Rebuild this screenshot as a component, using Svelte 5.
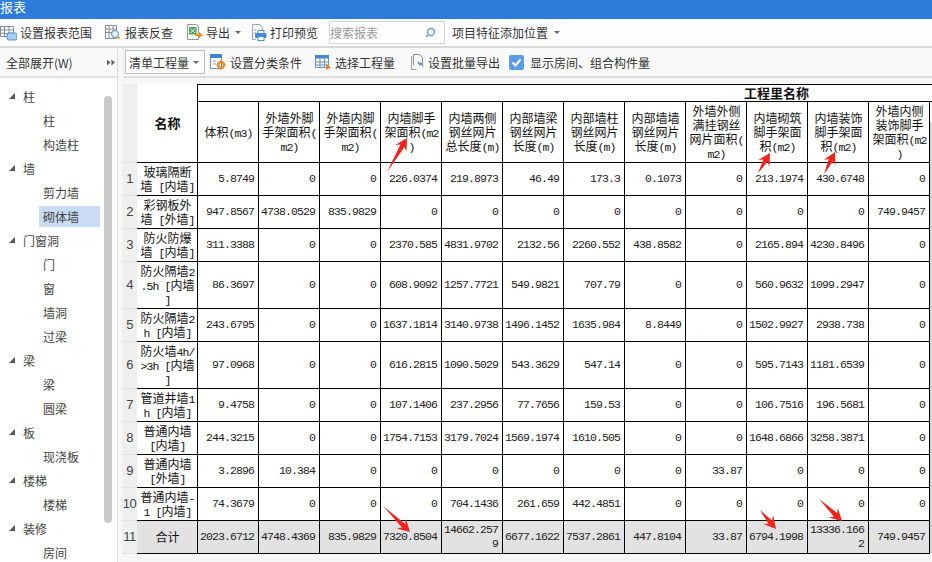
<script lang="ts">
	const tree = [
		{ name: '柱', kids: ['柱', '构造柱'] },
		{ name: '墙', kids: ['剪力墙', '砌体墙'] },
		{ name: '门窗洞', kids: ['门', '窗', '墙洞', '过梁'] },
		{ name: '梁', kids: ['梁', '圆梁'] },
		{ name: '板', kids: ['现浇板'] },
		{ name: '楼梯', kids: ['楼梯'] },
		{ name: '装修', kids: ['房间'] }
	];

	const headers = [
		'体积(m3)',
		'外墙外脚手架面积(m2)',
		'外墙内脚手架面积(m2)',
		'内墙脚手架面积(m2)',
		'内墙两侧钢丝网片总长度(m)',
		'内部墙梁钢丝网片长度(m)',
		'内部墙柱钢丝网片长度(m)',
		'内部墙墙钢丝网片长度(m)',
		'外墙外侧满挂钢丝网片面积(m2)',
		'内墙砌筑脚手架面积(m2)',
		'内墙装饰脚手架面积(m2)',
		'外墙内侧装饰脚手架面积(m2)'
	];

	const rows = [
		['玻璃隔断墙 [内墙]', '5.8749', '0', '0', '226.0374', '219.8973', '46.49', '173.3', '0.1073', '0', '213.1974', '430.6748', '0'],
		['彩钢板外墙 [外墙]', '947.8567', '4738.0529', '835.9829', '0', '0', '0', '0', '0', '0', '0', '0', '749.9457'],
		['防火防爆墙 [内墙]', '311.3388', '0', '0', '2370.585', '4831.9702', '2132.56', '2260.552', '438.8582', '0', '2165.894', '4230.8496', '0'],
		['防火隔墙2.5h [内墙]', '86.3697', '0', '0', '608.9092', '1257.7721', '549.9821', '707.79', '0', '0', '560.9632', '1099.2947', '0'],
		['防火隔墙2h [内墙]', '243.6795', '0', '0', '1637.1814', '3140.9738', '1496.1452', '1635.984', '8.8449', '0', '1502.9927', '2938.738', '0'],
		['防火墙4h/>3h [内墙]', '97.0968', '0', '0', '616.2815', '1090.5029', '543.3629', '547.14', '0', '0', '595.7143', '1181.6539', '0'],
		['管道井墙1h [内墙]', '9.4758', '0', '0', '107.1406', '237.2956', '77.7656', '159.53', '0', '0', '106.7516', '196.5681', '0'],
		['普通内墙 [内墙]', '244.3215', '0', '0', '1754.7153', '3179.7024', '1569.1974', '1610.505', '0', '0', '1648.6866', '3258.3871', '0'],
		['普通内墙 [外墙]', '3.2896', '10.384', '0', '0', '0', '0', '0', '0', '33.87', '0', '0', '0'],
		['普通内墙-1 [内墙]', '74.3679', '0', '0', '0', '704.1436', '261.659', '442.4851', '0', '0', '0', '0', '0'],
		['合计', '2023.6712', '4748.4369', '835.9829', '7320.8504', '14662.2579', '6677.1622', '7537.2861', '447.8104', '33.87', '6794.1998', '13336.1662', '749.9457']
	];

	// red annotation arrows, tail -> tip
	const arrows = [
		[387, 172, 407, 138],
		[758, 173, 770, 153],
		[824, 174, 835, 152],
		[383, 506, 410, 532],
		[760, 510, 776, 529],
		[819, 499, 842, 521]
	];

	function arrowPoints([x1, y1, x2, y2]: number[]) {
		const len = Math.hypot(x2 - x1, y2 - y1);
		const ux = (x2 - x1) / len;
		const uy = (y2 - y1) / len;
		const at = (back: number, side: number) =>
			`${(x2 - ux * back - uy * side).toFixed(1)},${(y2 - uy * back + ux * side).toFixed(1)}`;
		return [`${x1},${y1}`, at(9, 2.4), at(12, 6.5), `${x2},${y2}`, at(12, -6.5), at(9, -2.4)].join(' ');
	}

	// ascii runs get the narrow half-width font
	function runs(text: string) {
		return text
			.split(/([\x00-\x7f]+)/)
			.filter(Boolean)
			.map((t) => ({ t, lat: /^[\x00-\x7f]/.test(t) }));
	}
</script>

{#snippet mixed(text)}
	{#each runs(text) as r}<span class:lat={r.lat}>{r.t}</span>{/each}
{/snippet}

<div class="window">
	<div class="titlebar">报表</div>

	<div class="toolbar">
		<div class="tool">
			<svg viewBox="0 0 17 17" width="17" height="17">
				<path d="M.5 2.5h13v10H.5zM.5 6h13M.5 9.3h13M4.5 2.5v10M9 2.5v10" fill="none" stroke="#7d8ba0" />
				<rect x="7" y="9" width="10" height="7" rx="2" fill="#a9cdf2" stroke="#4f8fd8" />
			</svg>
			<span>设置报表范围</span>
		</div>
		<div class="tool">
			<svg viewBox="0 0 17 17" width="17" height="17">
				<path d="M.5 1.5h11v13H.5zM.5 5h11M.5 8.5h11M4 1.5v13M8 1.5v13" fill="none" stroke="#8b8f96" />
				<circle cx="10" cy="10" r="3.5" fill="#e6f1fc" stroke="#4f8fd8" />
				<path d="M12.5 12.5l2 2" stroke="#e8a020" stroke-width="2.4" />
			</svg>
			<span>报表反查</span>
		</div>
		<div class="tool export">
			<svg viewBox="0 0 17 17" width="17" height="17">
				<path d="M1.5.5h9l2 2v13h-11z" fill="#fff" stroke="#8f9a8f" />
				<rect x="3" y="3" width="7.5" height="7.5" fill="#4fa65a" />
				<path d="M4.5 4.5l4.5 4.5M9 4.5l-4.5 4.5" stroke="#fff" />
				<path d="M9 10h3.5V7.5L17 11l-4.5 3.5V12H9z" fill="#ef8f2c" />
			</svg>
			<span>导出</span>
			<i class="caret"></i>
		</div>
		<div class="tool">
			<svg viewBox="0 0 17 17" width="17" height="17">
				<path d="M2.5.5h7l3 3v6M2.5.5v15h3" fill="none" stroke="#9aa3ad" />
				<path d="M4 6h2M4 9h2" stroke="#6ea5de" />
				<rect x="5" y="9" width="11.5" height="5" rx="1" fill="#3f8ddb" />
				<rect x="8" y="6.5" width="6" height="3" fill="#fff" stroke="#3f8ddb" />
				<rect x="8" y="12.5" width="6" height="4" fill="#fff" stroke="#3f8ddb" />
			</svg>
			<span>打印预览</span>
		</div>
		<div class="search">
			<span>搜索报表</span>
			<svg viewBox="0 0 12 12" width="12" height="12">
				<circle cx="7" cy="5" r="3.5" fill="none" stroke="#5b9bdc" stroke-width="1.3" />
				<path d="M4.5 7.5L2 10" stroke="#5b9bdc" stroke-width="1.4" />
			</svg>
		</div>
		<div class="tool feature">
			<span>项目特征添加位置</span>
			<i class="caret"></i>
		</div>
	</div>

	<div class="main">
		<aside class="side">
			<div class="expand">
				<span>全部展开(W)</span>
				<svg viewBox="0 0 9 7" width="8" height="7"><path d="M0 0l4 3.5L0 7zM5 0l4 3.5L5 7z" fill="#666" /></svg>
			</div>
			<div class="tree">
				{#each tree as group}
					<div class="node parent"><i class="fold"></i>{group.name}</div>
					{#each group.kids as kid}
						<div class="node kid"><span class:selected={kid === '砌体墙'}>{kid}</span></div>
					{/each}
				{/each}
				<div class="thumb"></div>
			</div>
		</aside>

		<section class="content">
			<div class="subbar">
				<div class="select">
					<span>清单工程量</span>
					<i class="caret"></i>
				</div>
				<div class="tool">
					<svg viewBox="0 0 16 16" width="16" height="16">
						<path d="M.5.5h11v14H.5z" fill="#fff" stroke="#6f8fb5" />
						<rect x="0" y="0" width="12" height="4" fill="#3f86d0" />
						<path d="M3 7h3M3 10h3" stroke="#7d9cc0" />
						<circle cx="11" cy="11" r="3" fill="none" stroke="#ee8a24" stroke-width="2.4" />
						<path d="M11 6.5v2M11 13.5v2M6.5 11h2M13.5 11h2" stroke="#ee8a24" stroke-width="1.6" />
					</svg>
					<span>设置分类条件</span>
				</div>
				<div class="tool">
					<svg viewBox="0 0 16 16" width="16" height="16">
						<path d="M.5 1.5h13v12H.5zM.5 8h13M5 4.5v9M9.5 4.5v9M.5 11h13" fill="none" stroke="#6f93bd" />
						<rect x="0" y="1" width="14" height="3.5" fill="#4189d4" />
						<path d="M11 10l5 3.5-5 2.5z" fill="#e8802a" />
					</svg>
					<span>选择工程量</span>
				</div>
				<div class="tool">
					<svg viewBox="0 0 16 16" width="16" height="16">
						<path d="M3.5 2.5v13h5M3.5 2.5h1" fill="none" stroke="#9aa0a8" />
						<path d="M5.5.5h6l3 3v8M5.5.5v11" fill="none" stroke="#8a9098" />
						<path d="M9 8l3 4 .8-1.4L15 13l.8-.8-2.3-2.2 1.3-.8z" fill="#3f8ddb" />
					</svg>
					<span>设置批量导出</span>
				</div>
				<div class="tool checked">
					<svg viewBox="0 0 15 15" width="15" height="15">
						<rect width="15" height="15" rx="2" fill="#5a9bea" />
						<path d="M3.5 7.5l3 3 5-6" fill="none" stroke="#fff" stroke-width="2" />
					</svg>
					<span>显示房间、组合构件量</span>
				</div>
			</div>

			<div class="gridwrap">
				<table>
					<colgroup>
						<col class="c-idx" />
						<col class="c-name" />
						{#each headers as _}<col class="c-num" />{/each}
						<col class="c-edge" />
					</colgroup>
					<thead>
						<tr>
							<th class="idx top" rowspan="2"></th>
							<th class="name-h" rowspan="2">名称</th>
							<th class="group" colspan="13">工程里名称</th>
						</tr>
						<tr>
							{#each headers as h}
								<th class="col-h">{@render mixed(h)}</th>
							{/each}
							<td class="edge head"></td>
						</tr>
					</thead>
					<tbody>
						{#each rows as row, i}
							<tr class:total={i === rows.length - 1}>
								<td class="idx">{i + 1}</td>
								<td class="name">{@render mixed(row[0])}</td>
								{#each row.slice(1) as value}
									<td class="num">{value}</td>
								{/each}
								<td class="edge"></td>
							</tr>
						{/each}
					</tbody>
				</table>
			</div>
		</section>
	</div>

	<svg class="arrows" viewBox="0 0 932 562" width="932" height="562" aria-hidden="true">
		{#each arrows as a}
			<polygon points={arrowPoints(a)} fill="#f0241c" />
		{/each}
	</svg>
</div>

<style>
	:global(body) {
		margin: 0;
		background: #fff;
	}

	.window {
		position: relative;
		width: 932px;
		height: 562px;
		overflow: hidden;
		display: flex;
		flex-direction: column;
		font-family: "Noto Sans CJK SC", "Liberation Sans", sans-serif;
		font-size: 12px;
		color: #333;
	}

	.titlebar {
		height: 19px;
		flex: none;
		background: #2c7cdb;
		color: #fff;
		font-size: 13px;
		line-height: 13px;
	}

	.toolbar {
		height: 29px;
		box-sizing: border-box;
		flex: none;
		display: flex;
		align-items: center;
		gap: 13px;
		background: #fff;
		border-bottom: 2px solid #d9d9d9;
	}

	.tool {
		display: flex;
		align-items: center;
		gap: 3px;
		white-space: nowrap;
	}

	.tool svg {
		flex: none;
	}

	.export {
		margin-right: -4px;
	}

	.caret {
		width: 0;
		height: 0;
		margin-left: 2px;
		border: 3px solid transparent;
		border-top: 3px solid #666;
		border-bottom: 0;
	}

	.search {
		width: 116px;
		height: 23px;
		box-sizing: border-box;
		display: flex;
		align-items: center;
		justify-content: space-between;
		padding: 0 8px 0 0;
		border: 1px solid #d4d4d4;
		color: #999;
		margin-left: -2px;
	}

	.feature {
		margin-left: -6px;
		color: #333;
	}

	.feature .caret {
		margin-left: 3px;
	}

	.main {
		flex: 1;
		display: flex;
		min-height: 0;
	}

	.side {
		width: 118px;
		box-sizing: border-box;
		flex: none;
		display: flex;
		flex-direction: column;
		border-right: 1px solid #dcdcdc;
		background: #fff;
	}

	.expand {
		height: 30px;
		flex: none;
		box-sizing: border-box;
		display: flex;
		align-items: center;
		justify-content: space-between;
		padding: 0 2px 0 6px;
		border-bottom: 2px solid #e2e2e2;
		background: #fafafa;
	}

	.tree {
		position: relative;
		flex: 1;
		padding-top: 6px;
		overflow: hidden;
	}

	.node {
		height: 24px;
		display: flex;
		align-items: center;
		color: #444;
		white-space: nowrap;
	}

	.parent {
		padding-left: 9px;
	}

	.fold {
		width: 0;
		height: 0;
		margin-right: 8px;
		border-left: 6px solid transparent;
		border-bottom: 6px solid #555;
	}

	.kid {
		padding-left: 39px;
	}

	.kid span {
		padding: 3px 4px;
		line-height: 15px;
	}

	.kid .selected {
		width: 53px;
		background: #c9dcf3;
	}

	.thumb {
		position: absolute;
		left: 104px;
		top: 18px;
		width: 8px;
		height: 427px;
		border-radius: 4px;
		background: #c9c9c9;
	}

	.content {
		flex: 1;
		min-width: 0;
		display: flex;
		flex-direction: column;
		background: #f7f7f7;
	}

	.subbar {
		height: 30px;
		flex: none;
		box-sizing: border-box;
		margin-left: 5px;
		display: flex;
		align-items: center;
		gap: 13px;
		padding-left: 1px;
		background: #fafafa;
		border-bottom: 2px solid #dedede;
		border-left: 1px solid #e6e6e6;
	}

	.subbar .tool {
		gap: 4px;
	}

	.select {
		width: 80px;
		height: 24px;
		box-sizing: border-box;
		display: flex;
		align-items: center;
		justify-content: space-between;
		padding: 0 5px 0 3px;
		margin-right: -8px;
		background: #fff;
		border: 1px solid #bdbdbd;
	}

	.subbar .checked {
		gap: 6px;
		margin-left: -4px;
	}

	.gridwrap {
		flex: 1;
		min-height: 0;
		padding: 6px 0 0 4px;
		overflow: hidden;
	}

	table {
		table-layout: fixed;
		width: 810px;
		border-collapse: separate;
		border-spacing: 0;
		color: #111;
	}

	.c-idx {
		width: 15px;
	}

	.c-name {
		width: 61px;
	}

	.c-num {
		width: 61px;
	}

	.c-edge {
		width: 3px;
	}

	th,
	td {
		box-sizing: border-box;
		padding: 2px 1px 2px 2px;
		border-right: 1px solid #000;
		border-bottom: 1px solid #000;
		font-size: 12px;
		font-weight: 400;
		line-height: 14px;
		line-break: anywhere;
		word-break: break-all;
		text-align: center;
		vertical-align: middle;
		background: #fff;
	}

	/* keeps latin runs from stretching the 14px line box */
	.lat {
		font-family: "Liberation Mono", monospace;
		font-size: 11.5px;
		line-height: 10px;
		letter-spacing: -0.9px;
	}

	.group {
		height: 18px;
		padding: 0 0 0 546px;
		border-top: 1px solid #000;
		border-right: 0;
		text-align: left;
		font-size: 13px;
		font-weight: 700;
		white-space: nowrap;
	}

	.name-h {
		font-size: 13px;
		font-weight: 700;
	}

	.col-h {
		height: 61px;
	}

	.idx {
		padding: 0;
		border-right: 0;
		border-bottom: 1px solid #e2e2e2;
		background: #efefef;
		color: #444;
		font-family: "Liberation Sans", sans-serif;
		font-size: 13px;
		letter-spacing: -0.5px;
		white-space: nowrap;
	}

	tbody td {
		height: 33px;
	}

	.num {
		padding: 2px 4px 2px 1px;
		text-align: right;
		font-family: "Liberation Mono", monospace;
		font-size: 11.5px;
		letter-spacing: -0.9px;
		color: #222;
	}

	.total td {
		background: #e2e2e2;
	}

	.total .idx {
		background: #efefef;
	}

	.edge,
	.total .edge {
		padding: 0;
		border: 0;
		background: #d4d4d4;
	}

	.edge.head {
		background: linear-gradient(#fff 20px, #d4d4d4 20px);
	}

	.arrows {
		position: absolute;
		left: 0;
		top: 0;
		pointer-events: none;
	}
</style>
